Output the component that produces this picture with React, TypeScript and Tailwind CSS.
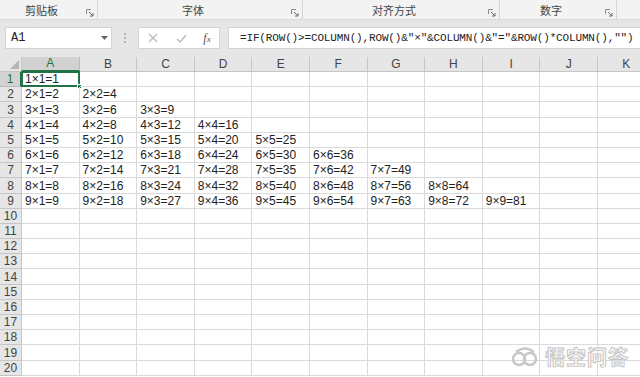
import React from "react";

const COLS = ["A", "B", "C", "D", "E", "F", "G", "H", "I", "J", "K"];
const ROWS = Array.from({ length: 20 }, (_, i) => i + 1);

function cellText(r: number, c: number) {
  if (r <= 9 && c <= r) return `${r}×${c}=${r * c}`;
  return "";
}

function Launcher() {
  return (
    <svg width="8" height="8" viewBox="0 0 8 8" className="shrink-0">
      <path d="M0.5 0.5H5M0.5 0.5V5" stroke="#8a8a8a" strokeWidth="1" fill="none" />
      <path d="M3 3L7 7M7 4V7H4" stroke="#6a6a6a" strokeWidth="1" fill="none" />
    </svg>
  );
}

function Group({ w, label, last }: { w: string; label: string; last?: boolean }) {
  return (
    <div className={`${w} h-full flex items-center pt-[3px] ${last ? "" : "border-r border-[#d6d6d6]"}`}>
      <div className="flex-1 text-center text-[11px] text-[#444]">{label}</div>
      <div className="w-[14px] flex items-center justify-center pt-[4px]">
        <Launcher />
      </div>
    </div>
  );
}

export default function App() {
  return (
    <div
      className="w-[640px] h-[377px] overflow-hidden bg-white relative"
      style={{ fontFamily: '"Liberation Sans", "Noto Sans CJK SC", sans-serif' }}
    >
      {/* Ribbon group labels */}
      <div className="h-[20px] bg-[#f3f3f3] border-b border-[#dadada] flex">
        <Group w="w-[98px]" label="剪贴板" />
        <Group w="w-[205px]" label="字体" />
        <Group w="w-[197px]" label="对齐方式" />
        <Group w="w-[117px]" label="数字" />
        <div className="flex-1" />
      </div>

      {/* Formula bar band */}
      <div className="h-[37px] bg-[#e6e6e6] flex items-start pt-[7px] pl-[5px]">
        <div className="w-[107px] h-[22px] bg-white border border-[#d4d4d4] flex items-center pl-[5px] pr-[3px]">
          <span
            className="flex-1 text-[12px] text-[#222]"
            style={{ fontFamily: '"Liberation Mono", monospace' }}
          >
            A1
          </span>
          <svg width="7" height="4" viewBox="0 0 7 4">
            <path d="M0 0H7L3.5 4Z" fill="#666" />
          </svg>
        </div>
        <div className="w-[26px] h-[22px] flex flex-col items-center justify-center gap-[2px]">
          <div className="w-[2px] h-[2px] bg-[#b5b5b5]" />
          <div className="w-[2px] h-[2px] bg-[#b5b5b5]" />
          <div className="w-[2px] h-[2px] bg-[#b5b5b5]" />
        </div>
        <div className="w-[82px] h-[22px] bg-white border border-[#d4d4d4] flex items-center">
          <div className="w-[28px] flex justify-center">
            <svg width="10" height="10" viewBox="0 0 10 10">
              <path d="M1 1L9 9M9 1L1 9" stroke="#b8b8b8" strokeWidth="1.2" />
            </svg>
          </div>
          <div className="w-[28px] flex justify-center">
            <svg width="11" height="9" viewBox="0 0 11 9">
              <path d="M1 5L4 8L10 1" stroke="#b8b8b8" strokeWidth="1.3" fill="none" />
            </svg>
          </div>
          <div
            className="flex-1 text-center text-[12px] italic text-[#555]"
            style={{ fontFamily: '"Liberation Serif", serif' }}
          >
            f<span className="text-[9px]">x</span>
          </div>
        </div>
        <div className="ml-[8px] flex-1 h-[22px] bg-white border border-[#d4d4d4] border-r-0 flex items-center pl-[11px]">
          <span
            className="text-[11px] text-[#222] whitespace-nowrap tracking-[-0.15px]"
            style={{ fontFamily: '"Liberation Mono", "Noto Sans CJK SC", monospace' }}
          >
            =IF(ROW()&gt;=COLUMN(),ROW()&amp;″×″&amp;COLUMN()&amp;″=″&amp;ROW()*COLUMN(),″″)
          </span>
        </div>
      </div>

      {/* Grid */}
      <div
        className="grid"
        style={{
          gridTemplateColumns: "22px repeat(11, 57.6px)",
          gridTemplateRows: "15px repeat(20, 15.2px)",
        }}
      >
        {/* corner */}
        <div className="bg-[#e6e6e6] border-r border-b border-[#c6c6c6] relative">
          <svg width="9" height="9" viewBox="0 0 9 9" className="absolute right-[2px] bottom-[2px]">
            <path d="M9 0V9H0Z" fill="#b4b4b4" />
          </svg>
        </div>
        {COLS.map((c, i) => (
          <div
            key={c}
            className={`border-r border-b flex items-end justify-center text-[12px] leading-none pb-[1px] ${
              i === 0
                ? "bg-[#d2d2d2] text-[#217346] border-b-[#217346] border-b-2 border-r-[#b8b8b8]"
                : "bg-[#e6e6e6] text-[#444] border-[#c6c6c6]"
            }`}
          >
            {c}
          </div>
        ))}
        {ROWS.map((r) => (
          <React.Fragment key={r}>
            <div
              className={`border-b flex items-end justify-center text-[12px] leading-none pb-[1px] ${
                r === 1
                  ? "bg-[#d2d2d2] text-[#217346] border-r-2 border-r-[#217346] border-b-[#b8b8b8]"
                  : "bg-[#e6e6e6] text-[#444] border-r border-[#c6c6c6]"
              }`}
            >
              {r}
            </div>
            {COLS.map((c, ci) => (
              <div
                key={c}
                className="border-r border-b border-[#dadada] text-[12px] leading-none text-[#222] pl-[3px] flex items-end pb-[1px] whitespace-nowrap relative"
              >
                {cellText(r, ci + 1)}
                {r === 1 && ci === 0 && (
                  <div className="absolute left-[-1px] top-[-1px] right-[-1px] bottom-[-1px] border-2 border-[#217346]">
                    <div className="absolute right-[-4px] bottom-[-4px] w-[5px] h-[5px] bg-[#217346] border border-white" />
                  </div>
                )}
              </div>
            ))}
          </React.Fragment>
        ))}
      </div>

      {/* Watermark */}
      <div className="absolute left-[510px] top-[342px] flex items-center gap-[5px] pointer-events-none">
        <svg width="30" height="22" viewBox="0 0 30 22">
          <circle cx="9" cy="13" r="6" fill="none" stroke="#c8c8c8" strokeWidth="2.5" />
          <circle cx="20" cy="13" r="6" fill="none" stroke="#c8c8c8" strokeWidth="2.5" />
          <path d="M6 6Q15 -1 24 6" fill="none" stroke="#c8c8c8" strokeWidth="2.5" />
        </svg>
        <span
          className="text-[20px] text-white tracking-[1px]"
          style={{
            fontFamily: '"Noto Sans CJK SC", sans-serif',
            WebkitTextStroke: "1px #c6c6c6",
            fontWeight: 700,
          }}
        >
          悟空问答
        </span>
      </div>
    </div>
  );
}
